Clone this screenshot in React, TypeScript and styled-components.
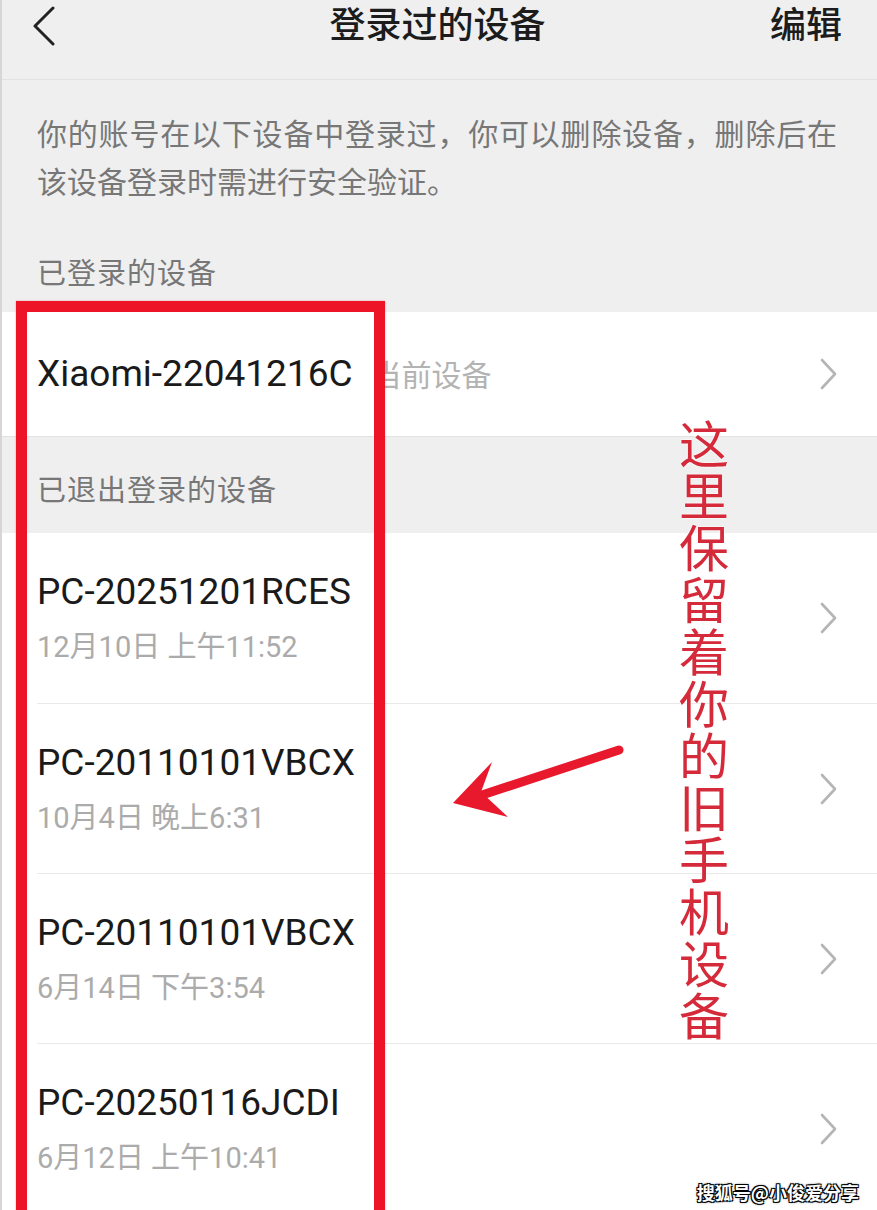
import React from "react";
import styled, { createGlobalStyle } from "styled-components";

const GlobalStyle = createGlobalStyle`
  html, body { margin: 0; padding: 0; background: #efefef; }
  * { box-sizing: border-box; }
`;

const FONT = `Roboto, "Noto Sans CJK SC", "Noto Sans", sans-serif`;

const Page = styled.div`
  position: relative;
  width: 877px;
  height: 1210px;
  overflow: hidden;
  background: #efefef;
  font-family: ${FONT};
  &::after {
    content: "";
    position: absolute;
    left: 0;
    top: 0;
    bottom: 0;
    width: 2px;
    background: #d6d6d6;
  }
`;

const Header = styled.header`
  display: grid;
  grid-template-columns: 1fr auto 1fr;
  align-items: start;
  height: 80px;
  padding: 0 35px 0 33px;
  border-bottom: 1px solid #e2e2e2;
`;

const BackButton = styled.button`
  justify-self: start;
  display: flex;
  align-items: center;
  height: 52px;
  padding: 0;
  border: 0;
  background: none;
  color: #222;
`;

const Title = styled.h1`
  margin: 0;
  font-size: 36px;
  font-weight: 500;
  line-height: 52px;
  color: #1c1c1c;
`;

const EditButton = styled.span`
  justify-self: end;
  font-size: 36px;
  font-weight: 500;
  line-height: 52px;
  color: #1c1c1c;
`;

const Notice = styled.div`
  padding: 31px 40px 0 37px;
  font-size: 30px;
  line-height: 48px;
  color: #777;
`;

const NoticeLine = styled.div<{ $justify?: boolean }>`
  text-align: ${(p) => (p.$justify ? "justify" : "left")};
  text-align-last: ${(p) => (p.$justify ? "justify" : "left")};
`;

const SectionLabel = styled.div<{ $top: number; $bottom: number; $divider?: boolean }>`
  padding: ${(p) => p.$top}px 37px ${(p) => p.$bottom}px;
  font-size: 29px;
  line-height: 48px;
  letter-spacing: 1px;
  color: #777;
  border-top: ${(p) => (p.$divider ? "1px solid #e2e2e2" : "0")};
`;

const List = styled.div`
  background: #fff;
`;

const Row = styled.div`
  padding-left: 37px;
  background: #fff;
`;

const RowInner = styled.div<{ $height: number; $divider?: boolean }>`
  display: flex;
  align-items: center;
  height: ${(p) => p.$height}px;
  padding-right: 39px;
  border-top: ${(p) => (p.$divider ? "1px solid #e9e9e9" : "0")};
`;

const RowText = styled.div`
  display: flex;
  flex-direction: column;
`;

const NameLine = styled.div`
  display: flex;
  align-items: baseline;
`;

const DeviceName = styled.span`
  font-size: 37px;
  line-height: 50px;
  color: #1a1a1a;
`;

const CurrentTag = styled.span`
  margin-left: 19px;
  font-size: 30px;
  color: #b3b3b3;
`;

const DeviceTime = styled.span`
  margin-top: 8px;
  font-size: 29px;
  line-height: 44px;
  color: #ababab;
`;

const Chevron = styled.svg`
  margin-left: auto;
  flex-shrink: 0;
`;

const HighlightBox = styled.div`
  position: absolute;
  left: 16px;
  top: 301px;
  width: 369px;
  height: 960px;
  border: 11px solid #ec1426;
  box-shadow: 0 0 2px rgba(236, 20, 38, 0.35);
  pointer-events: none;
`;

const Callout = styled.div`
  position: absolute;
  left: 679px;
  top: 419px;
  writing-mode: vertical-rl;
  font-family: "Noto Sans CJK SC", sans-serif;
  font-size: 50px;
  line-height: 50px;
  letter-spacing: 2px;
  color: #d42a3a;
  text-shadow: 0 0 2px #fff, 0 0 2px #fff;
`;

const ArrowSvg = styled.svg`
  position: absolute;
  left: 440px;
  top: 735px;
`;

const Watermark = styled.div`
  position: absolute;
  right: 18px;
  bottom: 6px;
  font-family: "Noto Sans CJK SC", sans-serif;
  font-size: 18px;
  font-weight: 700;
  line-height: 24px;
  color: #fff;
  text-shadow: -1px -1px 0 #000, 1px -1px 0 #000, -1px 1px 0 #000, 1px 1px 0 #000,
    0 0 3px #000;
`;

const ChevronIcon = () => (
  <Chevron width="18" height="32" viewBox="0 0 18 32">
    <polyline
      points="2,2 15,16 2,30"
      fill="none"
      stroke="#b5b5b5"
      strokeWidth="2.6"
      strokeLinecap="round"
      strokeLinejoin="round"
    />
  </Chevron>
);

const history = [
  { name: "PC-20251201RCES", time: "12月10日 上午11:52" },
  { name: "PC-20110101VBCX", time: "10月4日 晚上6:31" },
  { name: "PC-20110101VBCX", time: "6月14日 下午3:54" },
  { name: "PC-20250116JCDI", time: "6月12日 上午10:41" },
];

export default function App() {
  return (
    <Page>
      <GlobalStyle />
      <Header>
        <BackButton aria-label="返回">
          <svg width="22" height="40" viewBox="0 0 22 40">
            <polyline
              points="20,2 2,20 20,38"
              fill="none"
              stroke="#222"
              strokeWidth="3"
              strokeLinecap="round"
              strokeLinejoin="round"
            />
          </svg>
        </BackButton>
        <Title>登录过的设备</Title>
        <EditButton>编辑</EditButton>
      </Header>

      <Notice>
        <NoticeLine $justify>你的账号在以下设备中登录过，你可以删除设备，删除后在</NoticeLine>
        <NoticeLine>该设备登录时需进行安全验证。</NoticeLine>
      </Notice>

      <SectionLabel $top={43} $bottom={14}>已登录的设备</SectionLabel>
      <List>
        <Row>
          <RowInner $height={124}>
            <NameLine>
              <DeviceName>Xiaomi-22041216C</DeviceName>
              <CurrentTag>当前设备</CurrentTag>
            </NameLine>
            <ChevronIcon />
          </RowInner>
        </Row>
      </List>

      <SectionLabel $top={30} $bottom={18} $divider>
        已退出登录的设备
      </SectionLabel>
      <List>
        {history.map((d, i) => (
          <Row key={i}>
            <RowInner $height={170} $divider={i > 0}>
              <RowText>
                <DeviceName>{d.name}</DeviceName>
                <DeviceTime>{d.time}</DeviceTime>
              </RowText>
              <ChevronIcon />
            </RowInner>
          </Row>
        ))}
      </List>

      <HighlightBox />
      <Callout>这里保留着你的旧手机设备</Callout>
      <ArrowSvg width="200" height="100" viewBox="440 735 200 100">
        <line x1="619" y1="750" x2="482" y2="795" stroke="#e8192c" strokeWidth="9" strokeLinecap="round" />
        <polygon points="453,803 492,762 481,792 508,817" fill="#e8192c" />
      </ArrowSvg>
      <Watermark>搜狐号@小俊爱分享</Watermark>
    </Page>
  );
}
